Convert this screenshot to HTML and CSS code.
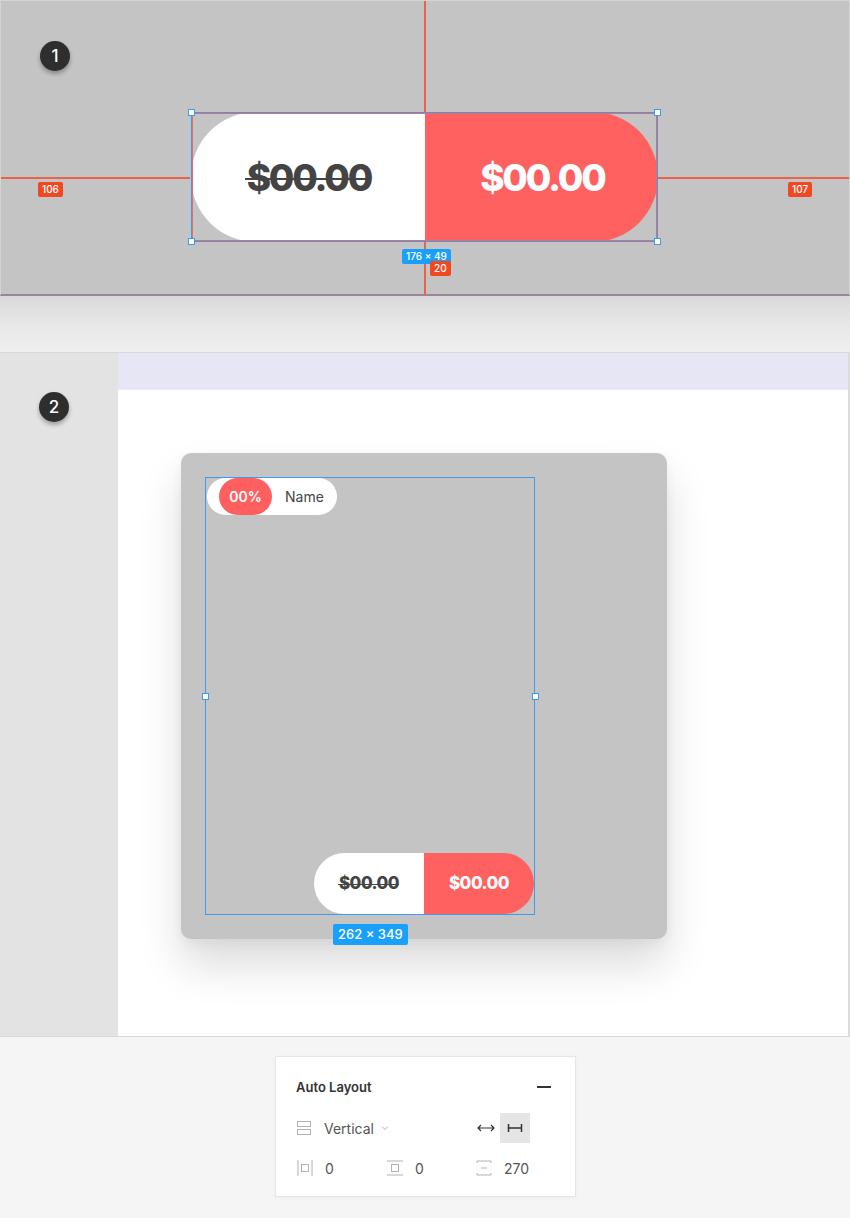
FILE: index.html
```html
<!DOCTYPE html>
<html>
<head>
<meta charset="utf-8">
<link rel="stylesheet" href="styles.css">
</head>
<body>
<div class="page">
  <section class="s1">
    <div class="badge b1">1</div>
    <div class="vline"></div>
    <div class="hline hl-left"></div>
    <div class="hline hl-right"></div>
    <div class="tag-orange t106">106</div>
    <div class="tag-orange t107">107</div>
    <div class="price-big">
      <div class="half white"><span class="strike">$00.00</span></div>
      <div class="half red"><span>$00.00</span></div>
      <div class="sel-red"></div>
      <div class="sel-blue">
        <i class="h tl"></i><i class="h tr"></i><i class="h bl"></i><i class="h br"></i>
      </div>
      <div class="tag-blue dim1">176 × 49</div>
      <div class="tag-orange t20">20</div>
    </div>
  </section>
  <div class="s1-shadow"></div>
  <section class="s2">
    <div class="s2-side"><div class="badge b2">2</div></div>
    <div class="s2-main">
      <div class="band"></div>
      <div class="canvas">
        <div class="card">
          <div class="frame">
            <div class="tagpill"><span class="pct">00%</span><span class="nm">Name</span></div>
            <div class="price-small">
              <div class="ps white"><span class="strike">$00.00</span></div>
              <div class="ps red"><span>$00.00</span></div>
            </div>
            <i class="h ml"></i><i class="h mr"></i>
            <div class="tag-blue dim2">262 × 349</div>
          </div>
        </div>
      </div>
    </div>
  </section>
  <div class="bottom">
    <div class="panel">
      <div class="p-head"><span>Auto Layout</span><span class="minus"></span></div>
      <div class="p-row r2">
        <div class="cell c1">
          <svg width="16" height="16" viewBox="0 0 16 16"><rect x="1.5" y="1.5" width="13" height="5" fill="none" stroke="#b3b3b3"/><rect x="1.5" y="9.5" width="13" height="5" fill="none" stroke="#b3b3b3"/></svg>
          <span class="val">Vertical</span>
          <svg class="chev" width="8" height="6" viewBox="0 0 8 6"><path d="M1 1.5 L4 4.5 L7 1.5" fill="none" stroke="#b3b3b3"/></svg>
        </div>
        <div class="cell c3">
          <svg class="ico-arrow" width="20" height="12" viewBox="0 0 20 12"><path d="M2 6 H18 M5 3 L2 6 L5 9 M15 3 L18 6 L15 9" fill="none" stroke="#333" stroke-width="1.2"/></svg>
          <div class="fixbox"><svg width="16" height="10" viewBox="0 0 16 10"><path d="M1.5 1 V9 M14.5 1 V9 M1.5 5 H14.5" fill="none" stroke="#333" stroke-width="1.5"/></svg></div>
        </div>
      </div>
      <div class="p-row r3">
        <div class="cell c1">
          <svg width="16" height="18" viewBox="0 0 16 18"><path d="M1 1 V17 M15 1 V17" stroke="#b3b3b3" fill="none"/><rect x="4.5" y="5.5" width="7" height="7" fill="none" stroke="#b3b3b3"/></svg>
          <span class="val">0</span>
        </div>
        <div class="cell c2">
          <svg width="18" height="16" viewBox="0 0 18 16"><path d="M1 1 H17 M1 15 H17" stroke="#b3b3b3" fill="none"/><rect x="5.5" y="4.5" width="7" height="7" fill="none" stroke="#b3b3b3"/></svg>
          <span class="val">0</span>
        </div>
        <div class="cell c3">
          <svg width="16" height="16" viewBox="0 0 16 16"><path d="M1 1 H15 M1 15 H15 M5 8 H11" stroke="#b3b3b3" fill="none"/><path d="M1 1 V3 M15 1 V3 M1 13 V15 M15 13 V15" stroke="#b3b3b3" fill="none"/></svg>
          <span class="val">270</span>
        </div>
      </div>
    </div>
  </div>
</div>
</body>
</html>
```
FILE: styles.css
```css
* { box-sizing: border-box; margin: 0; padding: 0; }
html, body { background: #f5f5f5; }
body { margin: 0; font-family: "Inter", "Noto Sans", sans-serif; }
.page { width: 850px; height: 1218px; overflow: hidden; }

.s1 {
  position: relative;
  height: 296px;
  background: #c4c4c4;
  border: 1px solid #d4d4d4;
  border-bottom: 2px solid #9b8596;
  padding: 111px 0 0 190px;
}
.badge {
  width: 30px; height: 30px; border-radius: 50%;
  background: #2e2e2e; color: #fff;
  font: 500 17px/30px "Inter", sans-serif;
  text-align: center;
  box-shadow: 0 3px 4px rgba(0,0,0,0.3);
}
.b1 { position: absolute; left: 39px; top: 40px; }
.vline { position: absolute; left: 423px; top: 0; width: 1.5px; height: 294px; background: #e8624c; }
.hline { position: absolute; top: 176px; height: 1.5px; background: #e8624c; }
.hl-left { left: 0; width: 189px; }
.hl-right { left: 657px; right: 0; }
.tag-orange {
  position: absolute; background: #f24822; color: #fff;
  font: 500 10px/15px "Inter", sans-serif; padding: 0 4px; border-radius: 2px;
}
.t106 { left: 37px; top: 181px; }
.t107 { left: 787px; top: 181px; }
.price-big {
  position: relative;
  width: 467px; height: 130px;
  display: flex;
}
.half {
  flex: 1; display: flex; align-items: center; justify-content: center;
  font: 800 37px/1 "Inter", sans-serif; letter-spacing: -2.2px;
}
.half span { margin-right: -2.2px; }
.half.white { background: #fff; color: #444; border-radius: 65px 0 0 65px; }
.half.red { background: #ff6060; color: #fff; border-radius: 0 65px 65px 0; }
.strike { position: relative; }
.strike::after {
  content: ""; position: absolute; left: -2px; right: 0; top: 52%; height: 2px; background: #444;
}
.sel-red { position: absolute; inset: 1px; border: 1px solid #ee6a5a; pointer-events: none; }
.sel-blue { position: absolute; inset: 0; border: 1px solid #3d9bea; }
.h {
  position: absolute; width: 7px; height: 7px; background: #fff; border: 1px solid #3d9bea; display: block;
}
.tl { left: -4px; top: -4px; } .tr { right: -4px; top: -4px; }
.bl { left: -4px; bottom: -4px; } .br { right: -4px; bottom: -4px; }
.tag-blue {
  position: absolute; background: #18a0fb; color: #fff; border-radius: 2px;
  font: 500 10px/15px "Inter", sans-serif; padding: 0 4px; white-space: nowrap;
}
.dim1 { left: 211px; top: 137px; }
.t20 { left: 239px; top: 149px; }

.s1-shadow {
  height: 57px;
  background: linear-gradient(#d9d9d9, #e9e9e9 55%, #efefef);
  border-bottom: 1px solid #d8d8d8;
}
.s2 {
  height: 684px;
  display: grid;
  grid-template-columns: 118px 1fr;
  border-bottom: 1px solid #d8d8d8;
}
.s2-side { background: #e3e3e3; padding: 39px 0 0 39px; }
.s2-main { background: #fff; border-right: 2px solid #dcdcdc; display: flex; flex-direction: column; }
.band { height: 37px; background: #e6e6f5; border-bottom: 1px solid #ececf6; }
.canvas { flex: 1; padding: 63px 0 0 63px; }
.card {
  width: 486px; height: 486px; background: #c4c4c4; border-radius: 10px;
  box-shadow: 0 26px 44px rgba(0,0,0,0.14), 0 4px 12px rgba(0,0,0,0.05);
  padding: 24px;
}
.frame {
  position: relative;
  width: 330px; height: 438px;
  border: 1.5px solid #3d9bea;
  display: flex; flex-direction: column; justify-content: space-between; align-items: flex-start;
}
.tagpill {
  margin: 0 0 0 1px;
  height: 37px; background: #fff; border-radius: 19px;
  display: flex; align-items: center; padding: 0 13px 0 12px;
}
.pct {
  height: 37px; width: 53px; border-radius: 19px; background: #ff5f5f; color: #fff;
  display: flex; align-items: center; justify-content: center;
  font: 600 14px "Inter", sans-serif;
}
.nm { margin-left: 13px; font: 400 14px "Inter", sans-serif; color: #444; }
.price-small { align-self: flex-end; display: flex; height: 61px; }
.ps {
  width: 110px; display: flex; align-items: center; justify-content: center;
  font: 800 17px/1 "Inter", sans-serif; letter-spacing: -0.5px;
}
.ps.white { background: #fff; color: #444; border-radius: 31px 0 0 31px; }
.ps.red { background: #ff6060; color: #fff; border-radius: 0 31px 31px 0; }
.ps .strike::after { height: 1.5px; left: -1px; right: 0; }
.ml { left: -4.5px; top: 215px; } .mr { right: -4.5px; top: 215px; }
.dim2 { left: 127px; top: 446px; font-size: 13px; line-height: 21px; padding: 0 5px; }

.bottom { height: 180px; padding: 19px 0 0 275px; }
.panel {
  width: 301px; height: 141px; background: #fff;
  border: 1px solid #e6e6e6; box-shadow: 0 1px 4px rgba(0,0,0,0.04);
  padding: 0 24px 0 20px;
}
.p-head {
  height: 56px; display: flex; align-items: center; justify-content: space-between;
  font: 600 13px "Inter", sans-serif; color: #333; padding-top: 4px;
}
.minus { width: 14px; height: 1.5px; background: #333; }
.p-row { display: flex; align-items: center; height: 30px; position: relative; }
.r3 { margin-top: 10px; }
.cell { display: flex; align-items: center; font: 400 14px "Inter", sans-serif; color: #555; }
.cell svg { flex: none; }
.c1 { width: 90px; }
.c1 .val { margin-left: 12px; }
.chev { margin-left: 7px; }
.c2 { width: 90px; }
.c2 .val { margin-left: 11px; }
.r3 .c3 .val { margin-left: 12px; }
.r2 .c3 { position: absolute; left: 180px; top: 0; }
.ico-arrow { margin-right: 4px; }
.fixbox { width: 30px; height: 30px; background: #e5e5e5; display: flex; align-items: center; justify-content: center; }
.r3 .c1 svg { margin-left: 1px; }
```
